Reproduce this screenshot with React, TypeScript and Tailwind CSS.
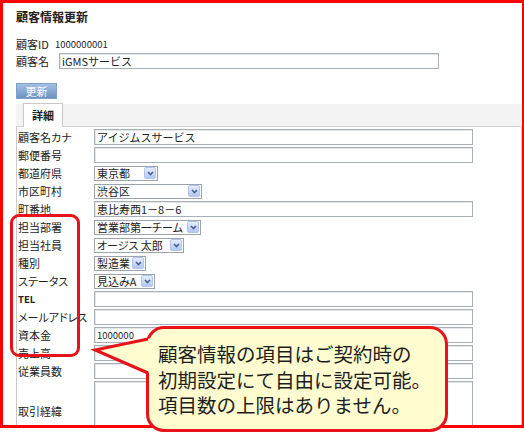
import React from 'react';

type Row = {
  label: string;
  type: 'input' | 'select';
  value?: string;
  w?: string;
  small?: boolean;
};

const rows: Row[] = [
  { label: '顧客名カナ', type: 'input', value: 'アイジムスサービス' },
  { label: '郵便番号', type: 'input' },
  { label: '都道府県', type: 'select', value: '東京都', w: 'w-[64px]' },
  { label: '市区町村', type: 'select', value: '渋谷区', w: 'w-[108px]' },
  { label: '町番地', type: 'input', value: '恵比寿西1－8－6' },
  { label: '担当部署', type: 'select', value: '営業部第一チーム', w: 'w-[107px]' },
  { label: '担当社員', type: 'select', value: 'オージス 太郎', w: 'w-[90px]' },
  { label: '種別', type: 'select', value: '製造業', w: 'w-[52px]' },
  { label: 'ステータス', type: 'select', value: '見込みA', w: 'w-[61px]' },
  { label: 'TEL', type: 'input' },
  { label: 'メールアドレス', type: 'input' },
  { label: '資本金', type: 'input', value: '1000000', small: true },
  { label: '売上高', type: 'input' },
  { label: '従業員数', type: 'input' },
];

const TextBox = ({ value, small, w = 'w-[379px]' }: { value?: string; small?: boolean; w?: string }) => (
  <div
    className={`${w} h-[16px] border border-[#a7afb8] shadow-[inset_1px_1px_0_#e4e7eb] bg-white pl-[2px] flex items-center whitespace-nowrap overflow-hidden ${
      small ? 'text-[9.5px]' : 'text-[11px]'
    } leading-[14px]`}
  >
    {value}
  </div>
);

const SelectBox = ({ value, w }: { value?: string; w?: string }) => (
  <div className={`${w} h-[15px] border border-[#9aa4ae] bg-white flex items-center justify-between`}>
    <span className="pl-[2px] text-[11px] leading-[13px] whitespace-nowrap [font-feature-settings:'palt']">{value}</span>
    <span className="mr-[1px] w-[12px] h-[12px] shrink-0 rounded-[2px] border border-[#b0c4ee] bg-gradient-to-b from-[#e4edff] to-[#b2c7f3] flex items-center justify-center">
      <svg width="7" height="5" viewBox="0 0 7 5">
        <path d="M1 1 L3.5 3.6 L6 1" fill="none" stroke="#4a5f8c" strokeWidth="1.6" />
      </svg>
    </span>
  </div>
);

export default function App() {
  return (
    <div className="relative w-[524px] h-[434px] bg-white overflow-hidden font-['Noto_Sans_CJK_JP',sans-serif] text-[#222]">
      <div className="h-[428px] border-[3px] border-r-[2px] border-[#ff0000] overflow-hidden">
        <div className="pl-[13px] pt-[7px]">
          <div className="h-[14px] text-[12px] leading-[14px] font-bold">顧客情報更新</div>

          <div className="mt-[12px] h-[16px] flex items-center text-[11px]">
            <span className="w-[39px] [font-feature-settings:'palt']">顧客ID</span>
            <span className="text-[9.5px]">1000000001</span>
          </div>

          <div className="mt-[1px] h-[16px] flex items-center text-[11px]">
            <span className="w-[43px]">顧客名</span>
            <TextBox value="iGMSサービス" w="w-[380px]" />
          </div>

          <div className="mt-[14px] w-[41px] h-[16px] border border-[#7d9fcb] bg-gradient-to-b from-[#a3bfe3] to-[#6e93c4] text-white text-[11px] leading-[14px] flex items-center justify-center">
            更新
          </div>

          <div className="mt-[5px] h-[23px] bg-[#f3f3f3] border-b border-[#d2d2d2] flex items-end pl-[7px]">
            <div className="w-[40px] h-[24px] -mb-px bg-white border border-b-0 border-[#c8c8c8] text-[11px] font-bold flex items-center justify-center">
              詳細
            </div>
          </div>

          <div className="border-l border-r border-[#c9c9c9] pt-[1px] h-[320px]">
            {rows.map((r) => (
              <div key={r.label} className="h-[18px] flex items-center">
                <span
                  className={`w-[77px] pl-[1px] whitespace-nowrap [font-feature-settings:'palt'] ${
                    r.label === 'TEL' ? 'text-[9.5px] font-bold' : 'text-[11px]'
                  }`}
                >
                  {r.label}
                </span>
                {r.type === 'input' ? <TextBox value={r.value} small={r.small} /> : <SelectBox value={r.value} w={r.w} />}
              </div>
            ))}
            <div className="mt-[1px] h-[60px] flex items-center">
              <span className="w-[77px] pl-[1px] text-[11px]">取引経緯</span>
              <div className="w-[379px] h-[60px] self-start border border-[#a7afb8] shadow-[inset_1px_1px_0_#e4e7eb] bg-white" />
            </div>
          </div>
        </div>
      </div>

      {/* highlight around the label column */}
      <div className="absolute left-[10px] top-[214px] w-[70px] h-[143px] border-[3px] border-[#e8121b] rounded-[9px]" />

      {/* callout */}
      <div className="absolute left-[146px] top-[326px] w-[302px] h-[106px] rounded-[18px] border-[3px] border-[#e8121b] bg-[#fffcd0] pl-[9px] pt-[12px] text-[19.5px] leading-[25.5px] text-[#1e1e1e] whitespace-nowrap">
        <div className="h-[25.5px]">顧客情報の項目はご契約時の</div>
        <div className="h-[25.5px]">初期設定にて自由に設定可能。</div>
        <div className="h-[25.5px]">項目数の上限はありません。</div>
      </div>
      <svg className="absolute left-[90px] top-[330px]" width="66" height="50" viewBox="0 0 66 50">
        <polygon points="5,20 62,8 62,44" fill="#fffcd0" />
        <polyline points="58,9 5,20 58,43" fill="none" stroke="#e8121b" strokeWidth="3" strokeLinejoin="miter" />
      </svg>
    </div>
  );
}
